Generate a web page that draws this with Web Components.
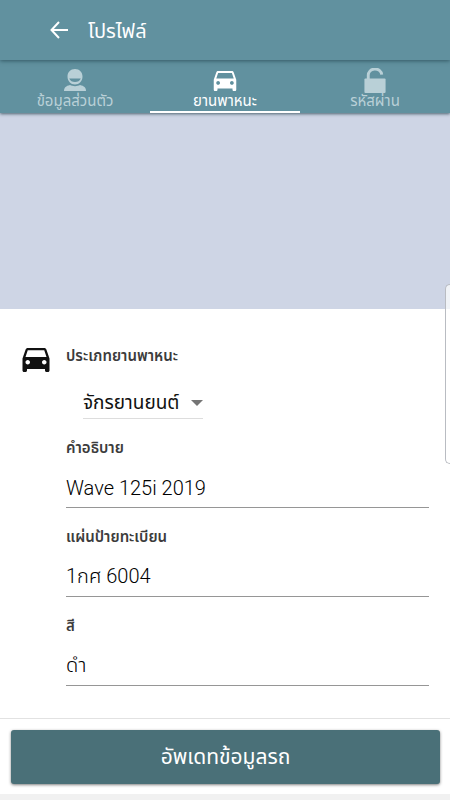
<!DOCTYPE html>
<html lang="th">
<head>
<meta charset="utf-8">
<meta name="viewport" content="width=device-width, initial-scale=1">
<title>โปรไฟล์</title>
<style>
    body {
        margin: 0;
        background: #fff;
        color: #111;
        font-family: "Noto Sans Thai", "Noto Sans", sans-serif;
        --bar: #61919f;
        --action: #4a7078;
    }
</style>
</head>
<body>
<profile-page></profile-page>

<script>
const CAR = `<path d="M18.92 6.01C18.72 5.42 18.16 5 17.5 5h-11c-.66 0-1.21.42-1.42 1.01L3 12v8c0 .55.45 1 1 1h1c.55 0 1-.45 1-1v-1h12v1c0 .55.45 1 1 1h1c.55 0 1-.45 1-1v-8l-2.08-5.99zM6.5 16c-.83 0-1.5-.67-1.5-1.5S5.67 13 6.5 13s1.5.67 1.5 1.5S7.33 16 6.5 16zm11 0c-.83 0-1.5-.67-1.5-1.5s.67-1.5 1.5-1.5 1.5.67 1.5 1.5-.67 1.5-1.5 1.5zM5 11l1.5-4.5h11L19 11H5z"/>`;

const ICONS = {
    back: ["0 0 18 18", `<path d="M18 9H2M9 1L1.5 9L9 17" fill="none" stroke="currentColor" stroke-width="2"/>`],
    person: ["0 0 22 22", `<path fill-rule="evenodd" d="M11 0C15.5 0 18.5 3.2 18.5 7.5C18.5 12 15.2 15.5 11 15.5S3.5 12 3.5 7.5C3.5 3.2 6.5 0 11 0ZM5.2 9.5C6.2 12 8.3 13 11 13S15.8 12 16.8 9.5Z"/><path d="M0 22C0 18.5 2 17 6 16C8.5 17.5 13.5 17.5 16 16C20 17 22 18.5 22 22Z"/>`],
    car: ["3 5 18 16", CAR],
    lock: ["0 0 22 26", `<path d="M4 13V8a7 6.5 0 0 1 14-1" fill="none" stroke="currentColor" stroke-width="3"/><rect y="11" width="22" height="15" rx="1"/>`]
};

class AppIcon extends HTMLElement {

    connectedCallback() {
        const [box, shape] = ICONS[this.getAttribute("name")];
        this.attachShadow({mode: "open"}).innerHTML = `
        <style>
            :host { display: block; }
            svg { display: block; width: 100%; height: 100%; fill: currentColor; }
        </style>
        <svg viewBox="${box}" aria-hidden="true">${shape}</svg>
        `;
    }
}

class AppBar extends HTMLElement {

    connectedCallback() {
        this.attachShadow({mode: "open"}).innerHTML = `
        <style>
            :host {
                display: flex;
                align-items: center;
                gap: 20px;
                height: 60px;
                padding-left: 50px;
                background: var(--bar);
                color: #fff;
                box-shadow: 0 1px 4px rgba(20, 50, 60, 0.6);
                position: relative;
                z-index: 2;
            }
            button { padding: 0; border: 0; background: none; color: inherit; }
            app-icon { width: 18px; height: 18px; }
            h1 { margin: 0; font-size: 20px; line-height: 24px; font-weight: 400; padding-top: 4px; }
        </style>
        <button type="button" aria-label="กลับ"><app-icon name="back"></app-icon></button>
        <h1><slot></slot></h1>
        `;
    }
}

class TabItem extends HTMLElement {

    connectedCallback() {
        this.attachShadow({mode: "open"}).innerHTML = `
        <style>
            :host { display: block; }
            button {
                display: flex;
                flex-direction: column;
                align-items: center;
                justify-content: flex-end;
                box-sizing: border-box;
                width: 100%;
                height: 53px;
                padding: 0;
                border: 0;
                border-bottom: 2px solid transparent;
                background: none;
                color: #b9d0d7;
                font-family: inherit;
                font-size: 15px;
                line-height: 18px;
                font-weight: 400;
            }
            app-icon { width: 24px; height: 22px; margin-bottom: 2px; }
            :host([name="car"]) app-icon { height: 20px; }
            :host([name="lock"]) app-icon { height: 25px; margin-bottom: 0; }
            :host([selected]) button { color: #fff; border-color: #fff; }
        </style>
        <button type="button" role="tab" aria-selected="${this.hasAttribute("selected")}">
            <app-icon name="${this.getAttribute("name")}"></app-icon>
            <span><slot></slot></span>
        </button>
        `;
    }
}

class TabBar extends HTMLElement {

    connectedCallback() {
        this.attachShadow({mode: "open"}).innerHTML = `
        <style>
            :host {
                display: grid;
                grid-template-columns: repeat(3, 1fr);
                background: var(--bar);
                box-shadow: 0 1px 3px rgba(20, 50, 60, 0.7);
                position: relative;
                z-index: 1;
            }
        </style>
        <slot></slot>
        `;
        this.setAttribute("role", "tablist");
    }
}

class TextField extends HTMLElement {

    connectedCallback() {
        this.attachShadow({mode: "open"}).innerHTML = `
        <style>
            :host { display: block; }
            label { display: block; font-size: 15px; line-height: 26px; font-weight: 600; color: #3c3c3c; }
            input {
                display: block;
                box-sizing: border-box;
                width: 100%;
                height: 46px;
                padding: 6px 0 0;
                border: 0;
                border-bottom: 1px solid #969696;
                border-radius: 0;
                outline: 0;
                background: none;
                color: #000;
                font-family: Roboto, "Noto Sans Thai", sans-serif;
                font-size: 20px;
                font-weight: 300;
            }
        </style>
        <label for="field">${this.getAttribute("label")}</label>
        <input id="field" type="text" value="${this.getAttribute("value")}">
        `;
    }
}

class SelectField extends HTMLElement {

    connectedCallback() {
        this.attachShadow({mode: "open"}).innerHTML = `
        <style>
            :host { display: block; }
            label { display: block; font-size: 15px; line-height: 26px; font-weight: 600; color: #3c3c3c; }
            .box {
                display: grid;
                grid-template-columns: 1fr auto;
                align-items: center;
                width: 120px;
                margin: 18px 0 0 17px;
                border-bottom: 1px solid #ddd;
            }
            select {
                grid-area: 1 / 1 / 2 / 3;
                appearance: none;
                width: 100%;
                height: 30px;
                padding: 0;
                border: 0;
                outline: 0;
                background: none;
                color: #111;
                font-family: inherit;
                font-size: 19px;
            }
            svg { grid-area: 1 / 2; width: 12px; height: 6px; fill: #757575; pointer-events: none; }
        </style>
        <label for="field">${this.getAttribute("label")}</label>
        <div class="box">
            <select id="field"><option>${this.getAttribute("value")}</option></select>
            <svg viewBox="0 0 12 6" aria-hidden="true"><path d="M0 0H12L6 6Z"/></svg>
        </div>
        `;
    }
}

class ActionFooter extends HTMLElement {

    connectedCallback() {
        this.attachShadow({mode: "open"}).innerHTML = `
        <style>
            :host {
                display: block;
                padding: 11px 10px 10px 11px;
                border-top: 1px solid #e2e2e2;
                border-bottom: 6px solid #f1f1f1;
            }
            button {
                display: block;
                width: 100%;
                height: 54px;
                padding: 0;
                border: 0;
                border-radius: 3px;
                background: var(--action);
                color: #fff;
                box-shadow: 0 1px 3px rgba(0, 0, 0, 0.5);
                font-family: inherit;
                font-size: 21px;
                font-weight: 400;
            }
        </style>
        <button type="submit"><slot></slot></button>
        `;
    }
}

class ProfilePage extends HTMLElement {

    connectedCallback() {
        this.attachShadow({mode: "open"}).innerHTML = `
        <style>
            :host { display: flex; flex-direction: column; min-height: 100vh; position: relative; }
            .banner { height: 196px; background: #ced5e5; }
            main {
                flex: 1;
                display: grid;
                grid-template-columns: 28px 1fr;
                column-gap: 16px;
                align-items: start;
                padding: 35px 21px 0 22px;
            }
            main > app-icon { height: 24px; margin-top: 4px; }
            form { display: flex; flex-direction: column; gap: 17px; }
            /* drawer handle that hangs over the right edge */
            .edge {
                position: absolute;
                top: 284px;
                right: 0;
                box-sizing: border-box;
                width: 5px;
                height: 180px;
                border: 1px solid #b9bcc2;
                border-right: 0;
                border-radius: 6px 0 0 6px;
                background: rgba(255, 255, 255, 0.7);
            }
        </style>
        <app-bar>โปรไฟล์</app-bar>
        <tab-bar>
            <tab-item name="person">ข้อมูลส่วนตัว</tab-item>
            <tab-item name="car" selected>ยานพาหนะ</tab-item>
            <tab-item name="lock">รหัสผ่าน</tab-item>
        </tab-bar>
        <div class="banner"></div>
        <main>
            <app-icon name="car"></app-icon>
            <form>
                <select-field label="ประเภทยานพาหนะ" value="จักรยานยนต์"></select-field>
                <text-field label="คำอธิบาย" value="Wave 125i 2019"></text-field>
                <text-field label="แผ่นป้ายทะเบียน" value="1กศ 6004"></text-field>
                <text-field label="สี" value="ดำ"></text-field>
            </form>
        </main>
        <action-footer>อัพเดทข้อมูลรถ</action-footer>
        <div class="edge"></div>
        `;
    }
}

customElements.define("app-icon", AppIcon);
customElements.define("app-bar", AppBar);
customElements.define("tab-item", TabItem);
customElements.define("tab-bar", TabBar);
customElements.define("text-field", TextField);
customElements.define("select-field", SelectField);
customElements.define("action-footer", ActionFooter);
customElements.define("profile-page", ProfilePage);
</script>
</body>
</html>
